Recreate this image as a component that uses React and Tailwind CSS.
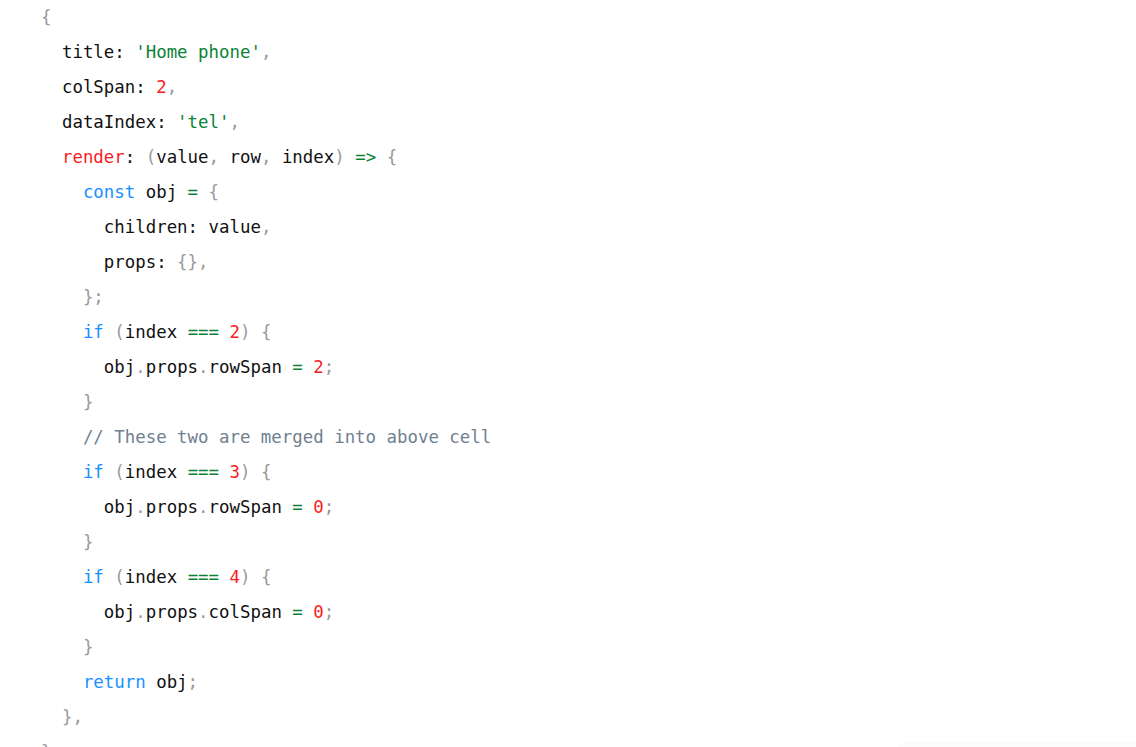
const P = ({ children }) => <span className="text-[#999999]">{children}</span>;
const K = ({ children }) => <span className="text-[#1890ff]">{children}</span>;
const S = ({ children }) => <span className="text-[#0b8235]">{children}</span>;
const N = ({ children }) => <span className="text-[#f81d22]">{children}</span>;
const O = ({ children }) => <span className="text-[#0b8235]">{children}</span>;
const C = ({ children }) => <span className="text-[#708090]">{children}</span>;

const lines = [
  [0, <P>{"{"}</P>],
  [1, <>title: <S>'Home phone'</S><P>,</P></>],
  [1, <>colSpan: <N>2</N><P>,</P></>],
  [1, <>dataIndex: <S>'tel'</S><P>,</P></>],
  [1, <><N>render</N>: <P>(</P>value<P>,</P> row<P>,</P> index<P>)</P> <O>=&gt;</O> <P>{"{"}</P></>],
  [2, <><K>const</K> obj <O>=</O> <P>{"{"}</P></>],
  [3, <>children: value<P>,</P></>],
  [3, <>props: <P>{"{},"}</P></>],
  [2, <P>{"};"}</P>],
  [2, <><K>if</K> <P>(</P>index <O>===</O> <N>2</N><P>)</P> <P>{"{"}</P></>],
  [3, <>obj<P>.</P>props<P>.</P>rowSpan <O>=</O> <N>2</N><P>;</P></>],
  [2, <P>{"}"}</P>],
  [2, <C>// These two are merged into above cell</C>],
  [2, <><K>if</K> <P>(</P>index <O>===</O> <N>3</N><P>)</P> <P>{"{"}</P></>],
  [3, <>obj<P>.</P>props<P>.</P>rowSpan <O>=</O> <N>0</N><P>;</P></>],
  [2, <P>{"}"}</P>],
  [2, <><K>if</K> <P>(</P>index <O>===</O> <N>4</N><P>)</P> <P>{"{"}</P></>],
  [3, <>obj<P>.</P>props<P>.</P>colSpan <O>=</O> <N>0</N><P>;</P></>],
  [2, <P>{"}"}</P>],
  [2, <><K>return</K> obj<P>;</P></>],
  [1, <P>{"},"}</P>],
  [0, <P>{"},"}</P>],
];

const pads = ["pl-0", "pl-[2ch]", "pl-[4ch]", "pl-[6ch]"];

export default function App() {
  return (
    <div className="relative h-[747px] w-[1136px] overflow-hidden bg-white">
      <pre className="mt-0 pl-[41px] font-['DejaVu_Sans_Mono','Liberation_Mono',monospace] text-[17.4px] leading-[35px] text-[#111111]">
        {lines.map(([indent, content], i) => (
          <div key={i} className={`h-[35px] ${pads[indent]}`}>
            {content}
          </div>
        ))}
      </pre>
      <div className="absolute left-[900px] top-[744px] h-[20px] w-[300px] bg-[#fbfbfb] shadow-[0_-1px_3px_rgba(0,0,0,0.03)]" />
    </div>
  );
}
